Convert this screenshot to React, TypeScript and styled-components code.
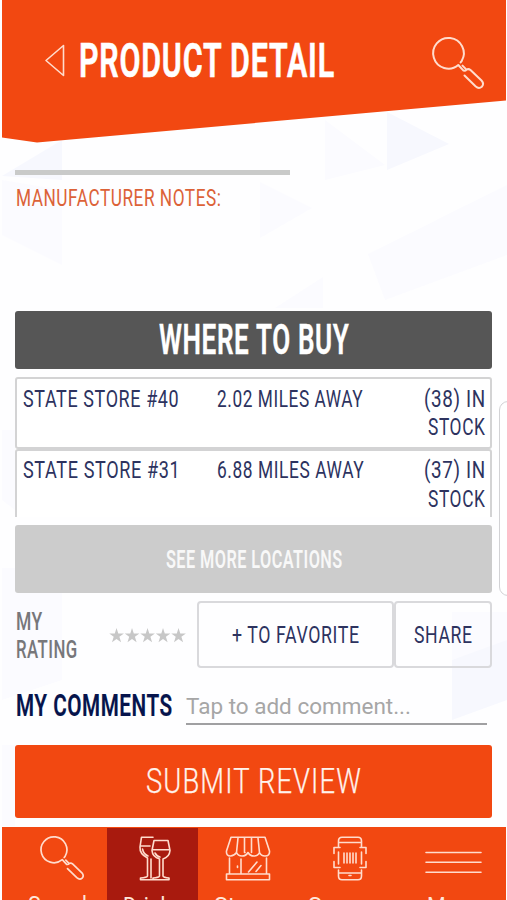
import React, { useLayoutEffect, useRef, useState } from "react";
import styled, { createGlobalStyle } from "styled-components";

const orange = "#f24811";
const navy = "#2d335f";

const GlobalStyle = createGlobalStyle`
  * { box-sizing: border-box; }
  html, body { margin: 0; background: #fff; overflow: hidden; }
  body { font-family: Roboto, "Liberation Sans", sans-serif; }
`;

const FitBox = styled.span<{ $w: number }>`
  display: block;
  flex: none;
  width: ${(p) => p.$w}px;
  white-space: nowrap;
`;
const FitInner = styled.span`
  display: inline-block;
  transform-origin: 0 50%;
`;

/* Condenses a line of text to a given width. */
function Fit({ w, children }: { w: number; children: string }) {
  const ref = useRef<HTMLSpanElement>(null);
  const [scale, setScale] = useState(1);
  useLayoutEffect(() => {
    const el = ref.current;
    if (!el) return;
    const spacing = parseFloat(getComputedStyle(el).letterSpacing) || 0;
    setScale(w / (el.offsetWidth - spacing));
  }, [w, children]);
  return (
    <FitBox $w={w}>
      <FitInner ref={ref} style={{ transform: `scaleX(${scale})` }}>{children}</FitInner>
    </FitBox>
  );
}

const Screen = styled.div`
  position: relative;
  width: 507px;
  height: 900px;
  overflow: hidden;
  background: #fefeff;
  display: flex;
  flex-direction: column;
`;
const Facets = styled.svg`
  position: absolute;
  inset: 0;
`;
const Header = styled.header`
  position: relative;
  flex: none;
  height: 143px;
  padding: 0 23px 18px 45px;
  display: flex;
  align-items: center;
  background: ${orange};
  clip-path: polygon(2px 0, 506px 0, 506px 100.5px, 37px 142.5px, 2px 137.5px);
`;
const Title = styled.h1`
  margin: -3px auto 0 14px;
  font-size: 49px;
  line-height: 60px;
  font-weight: 600;
  letter-spacing: 1.3px;
  color: #fff;
  -webkit-text-stroke: 0.7px #fff;
`;
const Content = styled.main`
  position: relative;
  flex: none;
  height: 684px;
  padding: 27px 15px 0;
  display: flex;
  flex-direction: column;
`;
const Divider = styled.div`
  width: 275px;
  height: 5px;
  background: #c9cac9;
`;
const Notes = styled.h2`
  margin: 9px 0 0;
  height: 127px;
  padding-left: 1px;
  font-size: 23px;
  line-height: 30px;
  font-weight: 400;
  letter-spacing: 0.7px;
  color: #dc6238;
`;
const Banner = styled.div<{ $kind: "dark" | "muted" | "primary" }>`
  flex: none;
  width: 477px;
  display: flex;
  align-items: center;
  justify-content: center;
  border-radius: 3px;
  color: #fff;
  ${(p) =>
    p.$kind === "dark"
      ? "height:58px;padding-bottom:2px;background:#565656;font-size:42px;font-weight:600;letter-spacing:1px;-webkit-text-stroke:.4px #fff;"
      : p.$kind === "muted"
      ? "height:68px;padding-bottom:2px;background:#ccc;font-size:26.5px;font-weight:600;letter-spacing:.7px;color:#f8f8f8;"
      : `height:73px;background:${orange};font-size:35px;font-weight:300;letter-spacing:1.4px;color:#fff3ed;-webkit-text-stroke:.25px #fff3ed;`}
`;
const Stores = styled.div`
  width: 477px;
  height: 140px;
  margin: 8px 0 8px;
  overflow: hidden;
`;
const Store = styled.div`
  height: 71.5px;
  padding: 5.5px 5px 0 6px;
  border: 2px solid #d3d3d4;
  border-radius: 3px;
  background: #fff;
  display: grid;
  grid-template-columns: 194px 1fr auto;
  font-size: 23.5px;
  line-height: 28.5px;
  letter-spacing: 0.8px;
  color: ${navy};
`;
const Stock = styled.div`
  display: flex;
  flex-direction: column;
  align-items: flex-end;
`;
const Actions = styled.div`
  width: 477px;
  height: 67px;
  margin-top: 8px;
  display: flex;
  align-items: center;
`;
const RatingLabel = styled.div`
  width: 94px;
  padding-left: 1px;
  font-size: 26.5px;
  line-height: 28px;
  font-weight: 500;
  letter-spacing: 0.7px;
  color: #77777a;
`;
const Stars = styled.svg`
  width: 78px;
  height: 18px;
  fill: #c7c7c7;
`;
const Outline = styled.button<{ $w: number }>`
  width: ${(p) => p.$w}px;
  height: 67px;
  margin: 0;
  padding: 0;
  display: flex;
  align-items: center;
  justify-content: center;
  background: transparent;
  border: 2px solid #d9d9dc;
  border-radius: 4px;
  font: 400 23.5px Roboto, sans-serif;
  letter-spacing: 0.8px;
  color: ${navy};
`;
const Gap = styled.div`
  flex: 1;
`;
const CommentRow = styled.div`
  width: 472px;
  height: 40px;
  margin: 17px 0 20px;
  padding-left: 1px;
  display: flex;
  justify-content: space-between;
`;
const CommentLabel = styled.div`
  font-size: 32px;
  line-height: 40px;
  font-weight: 600;
  letter-spacing: 0.8px;
  color: #06144c;
  -webkit-text-stroke: 0.2px #06144c;
`;
const Comment = styled.div`
  width: 301px;
  height: 40px;
  border-bottom: 2px solid #a0a0a2;
  font-size: 22.5px;
  line-height: 43px;
  color: #a6a6a6;
`;
const Nav = styled.nav`
  position: relative;
  flex: none;
  height: 73px;
  margin: 0 1px 0 2px;
  background: ${orange};
  display: grid;
  grid-template-columns: 105px 91px 101px 102px 105px;
`;
const Tab = styled.div<{ $active?: boolean }>`
  margin-top: 1px;
  padding-top: 8px;
  display: flex;
  flex-direction: column;
  align-items: center;
  overflow: hidden;
  background: ${(p) => (p.$active ? "#a81a0e" : "transparent")};
  color: #ffe6db;
  font-size: 23px;
  line-height: 28px;
  font-weight: 400;
`;
const Icon = styled.svg<{ $shift?: number }>`
  display: block;
  flex: none;
  margin-left: ${(p) => p.$shift || 0}px;
  fill: none;
  stroke: #ffdccd;
  stroke-width: 1.6;
  stroke-linejoin: round;
  stroke-linecap: round;
  overflow: visible;
`;
const Label = styled.div<{ $shift?: number }>`
  margin-top: 12px;
  margin-left: ${(p) => p.$shift || 0}px;
`;
const SidePanel = styled.div`
  position: absolute;
  left: 499px;
  top: 401px;
  width: 20px;
  height: 195px;
  border: 1.5px solid #d2d2d5;
  border-radius: 9px;
  background: #fff;
`;

const Magnifier = ({ size, shift }: { size: number; shift?: number }) => (
  <Icon width={size} height={size} viewBox="0 0 52 52" $shift={shift}>
    <path
      strokeWidth={2}
      d="M29.8 23.8A15.3 15.3 0 1 0 26.3 28L31.5 33.6Q33.5 34 34.5 32.6Q36.5 31.5 38.5 33L49.5 43.5Q52.5 47 49.8 49.8Q46.8 52.3 43.5 49.3L32.5 38.5M30.5 28.6L34.5 32.6M29.8 23.8L28.6 25.4"
    />
  </Icon>
);

const star = "M7.2 0L9 5.4H14.6L10.1 8.7L11.8 14.2L7.2 10.9L2.7 14.2L4.4 8.7L0 5.4H5.5Z";
const starOffsets = [0.3, 15.8, 31.3, 46.8, 62.3];

export default function App() {
  return (
    <Screen>
      <GlobalStyle />
      <Facets width="507" height="900">
        <path fill="#f7f8fe" d="M387 112L449 144L387 170ZM2 176L62 140V180ZM452 660L507 635V700L452 720Z" />
        <path fill="#fbfbff" d="M368 254L507 185V255L385 300ZM2 180L62 190V265L2 235ZM260 182L312 208L260 238ZM2 568H62V680L2 700ZM325 120L385 165L325 180ZM275 308L323 277V308ZM2 745H15V826H2ZM2 430H15V510L2 500ZM452 612H507V640L452 660Z" />
      </Facets>
      <Header>
        <Icon width="20" height="34" viewBox="0 0 20 34">
          <path d="M18.5 -0.5V29.5L1 14.5Z" />
        </Icon>
        <Title><Fit w={255}>PRODUCT DETAIL</Fit></Title>
        <Magnifier size={52} />
      </Header>
      <Content>
        <Divider />
        <Notes><Fit w={205}>MANUFACTURER NOTES:</Fit></Notes>
        <Banner $kind="dark"><Fit w={190}>WHERE TO BUY</Fit></Banner>
        <Stores>
          <Store>
            <Fit w={156}>STATE STORE #40</Fit>
            <Fit w={146}>2.02 MILES AWAY</Fit>
            <Stock><Fit w={61}>(38) IN</Fit><Fit w={57}>STOCK</Fit></Stock>
          </Store>
          <Store>
            <Fit w={157}>STATE STORE #31</Fit>
            <Fit w={147}>6.88 MILES AWAY</Fit>
            <Stock><Fit w={61}>(37) IN</Fit><Fit w={57}>STOCK</Fit></Stock>
          </Store>
        </Stores>
        <Banner $kind="muted"><Fit w={176}>SEE MORE LOCATIONS</Fit></Banner>
        <Actions>
          <RatingLabel><Fit w={26}>MY</Fit><Fit w={61}>RATING</Fit></RatingLabel>
          <Stars viewBox="0 0 78 18">
            {starOffsets.map((x) => (
              <path key={x} d={star} transform={`translate(${x} 2)`} />
            ))}
          </Stars>
          <Gap />
          <Outline $w={197}><Fit w={127}>+ TO FAVORITE</Fit></Outline>
          <Outline $w={98}><Fit w={58}>SHARE</Fit></Outline>
        </Actions>
        <CommentRow>
          <CommentLabel><Fit w={156}>MY COMMENTS</Fit></CommentLabel>
          <Comment><Fit w={225}>Tap to add comment...</Fit></Comment>
        </CommentRow>
        <Banner $kind="primary"><Fit w={215}>SUBMIT REVIEW</Fit></Banner>
      </Content>
      <Nav>
        <Tab>
          <Magnifier size={44} shift={15} />
          <Label $shift={12}><Fit w={66}>Search</Fit></Label>
        </Tab>
        <Tab $active>
          <Icon width="32" height="45" viewBox="0 0 32 45" $shift={5}>
            <path d="M14 1.2H2.5L1 11Q0.5 18 8.5 22V40Q8 41.5 1.5 42V43.7H14M12 23V42M2 10H11M3.5 13Q4.5 18 9 20M15 4.5H29L31 14.5Q30.5 21 24 23V40Q24.5 41.5 30 42V43.7H14V42Q20 41.5 20.5 40V23Q13.5 21 13 14.5ZM14 13.8H30M16 17Q18 20.5 21 21" />
          </Icon>
          <Label><Fit w={59}>Drinks</Fit></Label>
        </Tab>
        <Tab>
          <Icon width="46" height="45" viewBox="0 0 46 45" $shift={-1}>
            <path d="M6 1.2H40L44.5 15Q45 20 40 20Q36 20 34.5 16.5Q33 20 29 20Q25 20 23 16.5Q21 20 17 20Q13 20 11.5 16.5Q9 20 5.5 20Q1 20 1.5 15ZM13 2L11.5 16.5M19.5 2V16.5H20M26.5 2V16.5M33 2L34.5 16.5M4.5 22V37.5M41.5 22V37.5M1.5 38H44.5V43.7H1.5ZM16 23V37.5M23.5 36L32 26M31 35.5L36 29.5M12.5 30V31.5" />
          </Icon>
          <Label $shift={-2}><Fit w={67}>Stores</Fit></Label>
        </Tab>
        <Tab>
          <Icon width="34" height="45" viewBox="0 0 34 45" $shift={-1}>
            <path d="M5.5 11V5Q5.5 1.2 9 1.2H25Q28.5 1.2 28.5 5V11M5.5 34V40Q5.5 43.7 9 43.7H25Q28.5 43.7 28.5 40V34M5.5 6.5H28.5M5.5 37H28.5M5.5 16V28M28.5 16V28M7 11.5H1V17.5M27 11.5H33V17.5M1 25.5V31.5H7M33 25.5V31.5H27M11 17V27M14 17V27M17 17V27M20 17V27M23 17V27M16 39.5H18" />
          </Icon>
          <Label><Fit w={85}>Scanner</Fit></Label>
        </Tab>
        <Tab>
          <Icon width="57" height="45" viewBox="0 0 57 45">
            <path d="M1 16.5H56M1 26.2H56M1 36.2H56" />
          </Icon>
          <Label><Fit w={54}>Menu</Fit></Label>
        </Tab>
      </Nav>
      <SidePanel />
    </Screen>
  );
}
